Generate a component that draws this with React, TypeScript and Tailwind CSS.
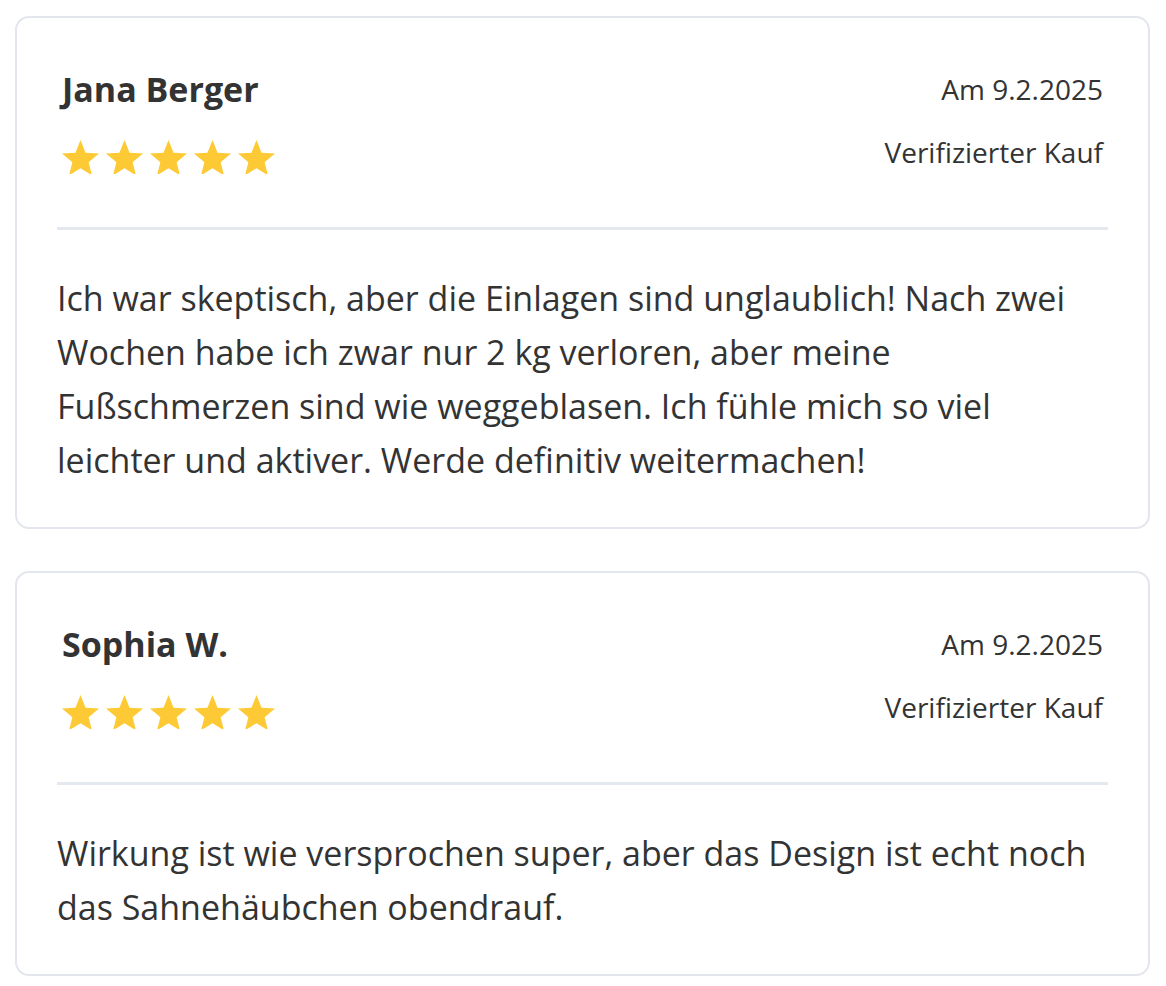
const reviews = [
  {
    name: 'Jana Berger',
    date: 'Am 9.2.2025',
    text: 'Ich war skeptisch, aber die Einlagen sind unglaublich! Nach zwei Wochen habe ich zwar nur 2 kg verloren, aber meine Fußschmerzen sind wie weggeblasen. Ich fühle mich so viel leichter und aktiver. Werde definitiv weitermachen!',
  },
  {
    name: 'Sophia W.',
    date: 'Am 9.2.2025',
    text: 'Wirkung ist wie versprochen super, aber das Design ist echt noch das Sahnehäubchen obendrauf.',
  },
];

// star glyph, bottom tips get clipped by the row like in the shop widget
const Star = () => (
  <svg width="37" height="36" viewBox="0 0 36 35" className="block shrink-0">
    <polygon
      points="18,0 22.9,12.3 36.07,13.13 25.9,21.6 29.17,34.37 18,27.4 6.83,34.37 10.1,21.6 -0.07,13.13 13.1,12.3"
      fill="#fdca35"
    />
  </svg>
);

const ReviewCard = ({ name, date, text }: { name: string; date: string; text: string }) => (
  <div className="rounded-[14px] border-2 border-[#e3e6ec] bg-white px-[40px] pt-[48px] pb-[40px]">
    {/* Header */}
    <div className="flex justify-between px-[5px]">
      <div className="flex flex-col">
        <h3 className="text-[34px] font-bold leading-[46px] text-[#333]">{name}</h3>
        <div className="mt-[28px] flex h-[34px] gap-[7px] overflow-hidden">
          {[0, 1, 2, 3, 4].map((i) => (
            <Star key={i} />
          ))}
        </div>
      </div>
      <div className="mt-[3px] flex flex-col items-end gap-[23px] text-[28px] leading-[40px] text-[#333]">
        <span>{date}</span>
        <span>Verifizierter Kauf</span>
      </div>
    </div>

    <div className="mt-[53px] h-[3px] bg-[#e4e9f0]" />

    <p className="mt-[41px] text-[34px] leading-[54px] text-[#333]">{text}</p>
  </div>
);

export default function App() {
  return (
    <div className="min-h-screen bg-white pt-[16px] pl-[15px] pr-[16px] pb-[15px] font-['Open_Sans',sans-serif]">
      <div className="flex flex-col gap-[42px]">
        {reviews.map((r) => (
          <ReviewCard key={r.name} {...r} />
        ))}
      </div>
    </div>
  );
}
